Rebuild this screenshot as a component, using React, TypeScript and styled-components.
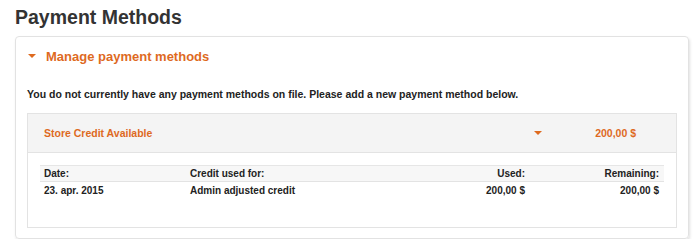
import styled, { createGlobalStyle } from 'styled-components';

const GlobalStyle = createGlobalStyle`
  body {
    margin: 0;
    background: #ffffff;
    font-family: "Liberation Sans", Arial, Helvetica, sans-serif;
    color: #222222;
  }
`;

const Page = styled.div`
  padding: 5px 11px 0 15px;
`;

const Title = styled.h1`
  margin: 0 0 7px;
  font-size: 19.5px;
  line-height: 24px;
  font-weight: 700;
  color: #333333;
`;

const Card = styled.section`
  border: 1px solid #e2e2e2;
  border-radius: 4px;
  box-shadow: 1px 2px 3px rgba(0, 0, 0, 0.12);
  padding: 10px 11px 10px 11px;
`;

const Toggle = styled.div`
  display: flex;
  align-items: center;
  gap: 10px;
  padding-left: 1px;
  height: 18px;
  font-size: 13px;
  font-weight: 700;
  color: #de6a1f;
`;

const Caret = styled.span<{ size: number }>`
  display: inline-block;
  width: 0;
  height: 0;
  border-left: ${({ size }) => size}px solid transparent;
  border-right: ${({ size }) => size}px solid transparent;
  border-top: ${({ size }) => size}px solid #de6a1f;
`;

const Notice = styled.p`
  margin: 21px 0 11px;
  font-size: 10.5px;
  line-height: 16px;
  font-weight: 700;
`;

const CreditBox = styled.div`
  border: 1px solid #e3e3e3;
`;

const CreditHeader = styled.div`
  display: grid;
  grid-template-columns: 1fr 102px;
  align-items: center;
  height: 38px;
  padding: 0 40px 0 16px;
  background: #f4f4f4;
  border-bottom: 1px solid #e3e3e3;
  font-size: 10.5px;
  font-weight: 700;
  color: #de6a1f;
`;

const HeaderRight = styled.div`
  display: flex;
  align-items: center;
  justify-content: space-between;
`;

const CreditBody = styled.div`
  padding: 12px 12px 29px;
`;

const Row = styled.div<{ head?: boolean }>`
  display: grid;
  grid-template-columns: 146px 1fr 100px 134px;
  align-items: center;
  height: ${({ head }) => (head ? '15px' : '16px')};
  background: ${({ head }) => (head ? '#f7f7f7' : 'transparent')};
  border-top: ${({ head }) => (head ? '1px solid #e6e6e6' : 'none')};
  border-bottom: ${({ head }) => (head ? '1px solid #e3e3e3' : 'none')};
  font-size: 10px;
  font-weight: 700;
  color: #222222;
`;

const Cell = styled.div<{ right?: boolean }>`
  padding: 0 5px 0 4px;
  text-align: ${({ right }) => (right ? 'right' : 'left')};
  white-space: nowrap;
`;

export default function App() {
  return (
    <>
      <GlobalStyle />
      <Page>
        <Title>Payment Methods</Title>
        <Card>
          <Toggle>
            <Caret size={4} />
            Manage payment methods
          </Toggle>
          <Notice>
            You do not currently have any payment methods on file. Please add a new payment method below.
          </Notice>
          <CreditBox>
            <CreditHeader>
              <span>Store Credit Available</span>
              <HeaderRight>
                <Caret size={4} />
                <span>200,00 $</span>
              </HeaderRight>
            </CreditHeader>
            <CreditBody>
              <Row head>
                <Cell>Date:</Cell>
                <Cell>Credit used for:</Cell>
                <Cell right>Used:</Cell>
                <Cell right>Remaining:</Cell>
              </Row>
              <Row>
                <Cell>23. apr. 2015</Cell>
                <Cell>Admin adjusted credit</Cell>
                <Cell right>200,00 $</Cell>
                <Cell right>200,00 $</Cell>
              </Row>
            </CreditBody>
          </CreditBox>
        </Card>
      </Page>
    </>
  );
};
